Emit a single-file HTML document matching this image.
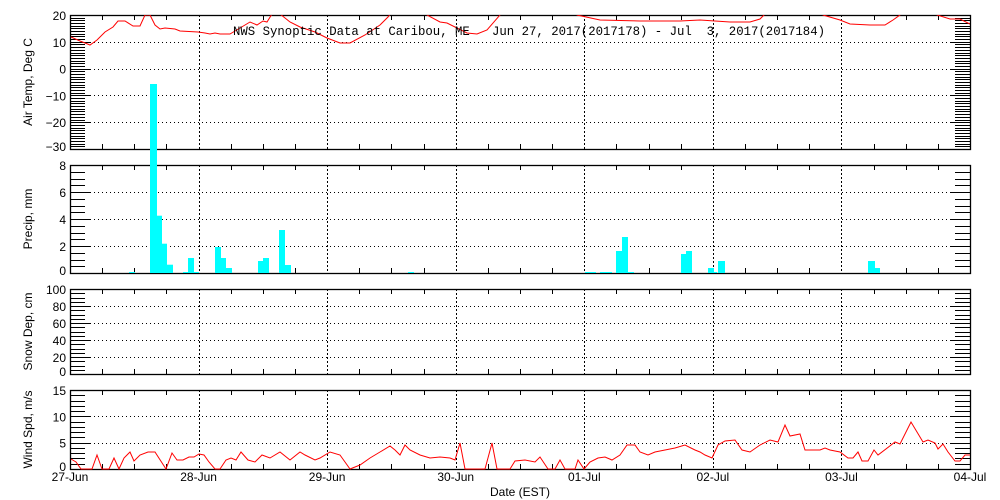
<!DOCTYPE html>
<html><head><meta charset="utf-8"><style>
html,body{margin:0;padding:0;background:#fff;width:1000px;height:500px;overflow:hidden}
svg{display:block}
text{font-family:"Liberation Sans",sans-serif;font-size:12px;fill:#000}
</style></head><body>
<svg id="s" width="1000" height="500" xmlns="http://www.w3.org/2000/svg"></svg>
<script>
var s=document.getElementById('s'),h='';
var X0=70,X1=970,DX=900/7;
function L(x1,y1,x2,y2,ex){h+='<line x1="'+x1+'" y1="'+y1+'" x2="'+x2+'" y2="'+y2+'" stroke="#000" stroke-width="1" '+(ex||'')+'/>';}
function T(x,y,t,a,ex){h+='<text x="'+x+'" y="'+y+'" text-anchor="'+(a||'end')+'" '+(ex||'')+'>'+t+'</text>';}
function panel(top,bot,vmin,vmax,major,minor,labels,title){
  var sc=(bot-top)/(vmax-vmin);
  function Y(v){return bot-(v-vmin)*sc;}
  // grid
  for(var v=vmin+major;v<vmax-1e-6;v+=major){var y=Math.round(Y(v))+.5;L(X0,y,X1,y,'stroke-dasharray="1 3"');}
  for(var d=1;d<7;d++){var x=Math.round(X0+d*DX)+.5;L(x,top,x,bot,'stroke-dasharray="2 2"');}
  // y ticks
  for(var v=vmin;v<=vmax+1e-6;v+=minor){var y=Math.round(Y(v))+.5;var mj=Math.abs((v-vmin)/major-Math.round((v-vmin)/major))<1e-6;var len=mj?20:15;L(X0,y,X0+len,y);L(X1-len,y,X1,y);}
  // x ticks
  for(var k=1;k<28;k++){var x=Math.round(X0+k*DX/4)+.5;var len=(k%4==0)?0:5;if(len){L(x,top,x,top+len);L(x,bot-len,x,bot);}}
  h+='<rect x="'+(X0+.5)+'" y="'+(top+.5)+'" width="'+(X1-X0)+'" height="'+(bot-top)+'" fill="none" stroke="#000" stroke-width="1.3"/>';
  for(var v=vmin;v<=vmax+1e-6;v+=labels){var y=Y(v);if(y>bot-3)y=bot-3;T(66,y+5,(v<0?'\u2212'+(-v):v));}
  var cy=(top+bot)/2;
  h+='<text x="32" y="'+cy+'" text-anchor="middle" transform="rotate(-90 32 '+cy+')">'+title+'</text>';
  return Y;
}
// precip bars first (tall bar spans into top panel)
var P=[[129,135,272],[150,157,84],[157,162,215.7],[162,167,243.7],[167,173,264.7],[183,188,272],[188,194,258],[194,199,272],[215,221,247],[221,226,258],[226,232,268],[258,263,261],[263,269,258],[279,285,230],[285,291,265],[408,414,272],[585,596,272],[600,612,272],[616,622,251],[622,628,237],[628,634,272],[681,686,254],[686,692,251],[708,714,268],[714,717,272],[718,725,261],[868,875,261],[875,880,268]];
var bars='';
P.forEach(function(b){bars+='<rect x="'+b[0]+'" y="'+b[2]+'" width="'+(b[1]-b[0])+'" height="'+(273-b[2])+'" fill="#00ffff"/>';});
panel(15,149,-30,20,10,1,10,'Air Temp, Deg C');
panel(165,273,0,8,2,0.5,2,'Precip, mm');
panel(289,374,0,100,20,5,20,'Snow Dep, cm');
panel(390,469,0,15,5,1,5,'Wind Spd, m/s');
h+=bars;
h+='<clipPath id="c1"><rect x="70" y="15" width="900" height="134"/></clipPath>';
var tp="71,37 80,41 85,43 90,45 97,40 105,32 113,27 118,21 125,21 133,26 140,26 145,15 150,15 155,25 160,29 165,28 175,29 180,31 198,32 205,33 210,34 215,33 220,34 230,34 240,28 250,22 257,25 263,21 267,22 272,14 280,14 290,22 300,27 315,32 327,38 340,43 350,43 365,35 380,25 388,17 392,12 425,12 427,15 440,22 447,23 467,33 477,34 487,30 500,15 502,12 575,12 577,15 600,20 640,21 680,21 700,20 730,22 750,22 760,19 765,14 822,14 823,15 840,20 850,24 870,25 885,25 893,20 900,15 902,12 935,12 937,15 950,19 960,19 970,24";
h+='<polyline clip-path="url(#c1)" points="'+tp+'" fill="none" stroke="#ff0000" stroke-width="1"/>';
var wp="71,459 76,462 81,469 92,469 97,455 102,469 109,469 114,458 119,469 124,458 130,452 134,461 140,455 148,452 155,452 166,469 172,453 177,460 183,460 189,457 194,457 199,454 204,455 209,462 215,469 220,469 226,460 231,458 236,460 241,452 248,460 255,462 262,455 270,458 280,452 290,460 300,452 305,455 315,460 320,458 330,452 340,455 345,462 350,469 360,465 370,458 380,452 390,446 395,450 400,455 405,445 410,450 420,455 430,458 440,457 450,458 455,460 460,443 465,469 480,469 485,469 492,443 497,469 510,469 515,461 525,460 535,462 540,457 548,469 555,469 560,460 565,469 575,469 578,460 584,469 590,462 598,458 605,457 612,460 620,455 627,445 635,445 640,452 648,455 655,452 665,450 675,448 685,445 695,450 700,452 705,455 712,458 718,445 725,441 735,440 742,450 750,452 760,445 770,440 778,442 785,425 790,436 800,434 805,450 820,450 825,448 830,450 840,452 848,458 853,458 858,452 862,461 868,461 874,450 878,455 895,442 900,444 911,422 923,442 928,440 935,443 938,449 943,444 948,452 955,461 960,461 965,455 970,455";
h+='<polyline points="'+wp+'" fill="none" stroke="#ff0000" stroke-width="1"/>';
h+='<text x="233" y="35" textLength="592" lengthAdjust="spacingAndGlyphs" style="font-family:\'Liberation Mono\',monospace;font-size:13px" xml:space="preserve">NWS Synoptic Data at Caribou, ME   Jun 27, 2017(2017178) - Jul  3, 2017(2017184)</text>';
var dl=['27-Jun','28-Jun','29-Jun','30-Jun','01-Jul','02-Jul','03-Jul','04-Jul'];
dl.forEach(function(t,i){T(X0+i*DX,481,t,'middle');});
T(520,496,'Date (EST)','middle');
s.innerHTML=h;
</script>
</body></html>
